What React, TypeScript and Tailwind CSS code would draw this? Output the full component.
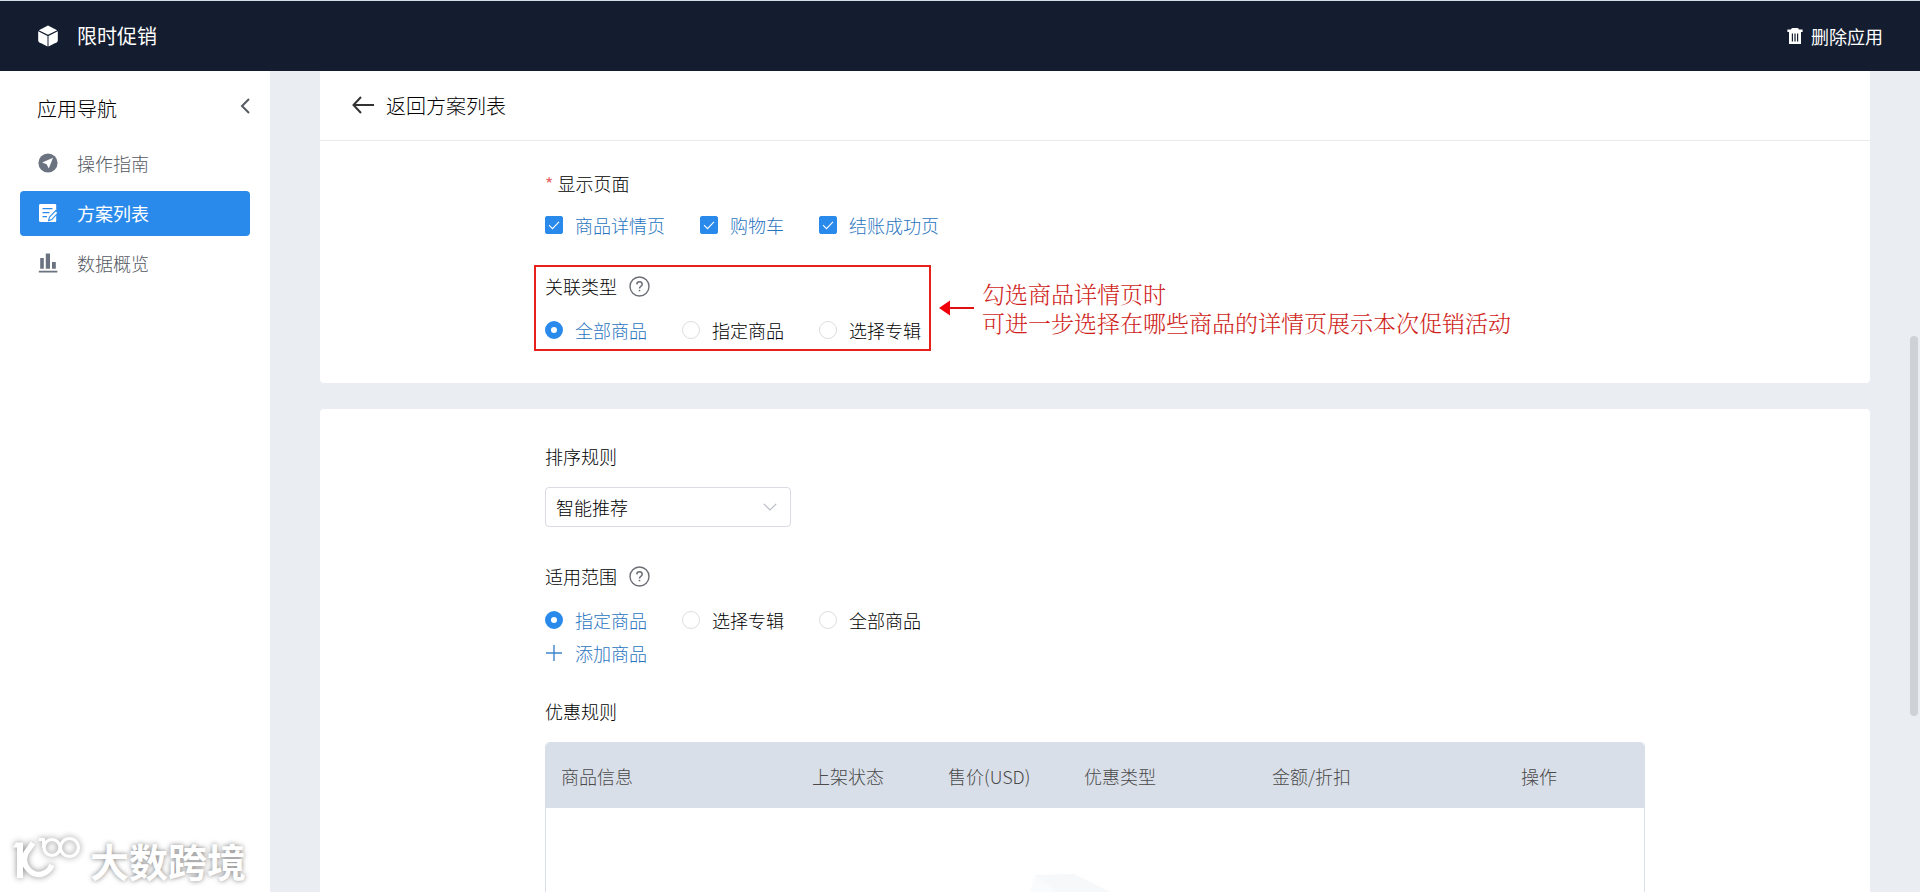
import { useState } from "react";
import type { ReactNode } from "react";

function CubeIcon() {
  return (
    <svg viewBox="0 0 20 22" className="h-[22px] w-5" fill="#fff" aria-hidden="true">
      <path d="M10 0.5 19.2 5.2 10 9.8 0.8 5.2Z" />
      <path d="M0.2 6.2 9.5 10.9V21.6L1.2 17.3Q0.2 16.7 0.2 15.6Z" />
      <path d="M19.8 6.2 10.5 10.9V21.6L18.8 17.3Q19.8 16.7 19.8 15.6Z" />
    </svg>
  );
}

function TrashIcon() {
  return (
    <svg viewBox="0 0 16 16" className="size-4" fill="#fff" aria-hidden="true">
      <path
        fillRule="evenodd"
        d="M4 1.5Q4.2 0 5.6 0h4.8Q11.8 0 12 1.5H15.6V4H14V16H2V4H0.4V1.5ZM4.8 5.6V13.4H6V5.6ZM7.4 5.6V13.4H8.6V5.6ZM10 5.6V13.4H11.2V5.6Z"
      />
    </svg>
  );
}

function GuideIcon() {
  return (
    <svg viewBox="0 0 20 20" className="size-5" aria-hidden="true">
      <circle cx="10" cy="10" r="9.6" fill="#6b7280" />
      <path d="M15 4.8 4.2 9.6 8.6 11.2 10.8 15.4Z" fill="#fff" />
    </svg>
  );
}

function ListIcon() {
  return (
    <svg viewBox="0 0 20 20" className="size-5" fill="none" aria-hidden="true">
      <path d="M2.5 1H17Q18.2 1 18.2 2.2V17.8Q18.2 19 17 19H2.5Q1 19 1 17.8V2.2Q1 1 2.5 1Z" fill="#fff" />
      <path d="M4.5 5.6H14.5M4.5 9.6H11.5M4.5 13.6H9" stroke="#2a8aeb" strokeWidth="1.3" />
      <path d="M10.6 17.6 11.4 14.2 17.8 7.6 20 9.8 13.8 16.6Z" fill="#fff" stroke="#2a8aeb" strokeWidth="1.1" />
    </svg>
  );
}

function ChartIcon() {
  return (
    <svg viewBox="0 0 20 20" className="size-5" fill="#6b7280" aria-hidden="true">
      <path d="M2.2 5H5.8V15.8H2.2ZM7.8 0.6H12V15.8H7.8ZM14 9H17.8V15.8H14ZM0.8 17.8H19.4V19.6H0.8Z" />
    </svg>
  );
}

function HelpIcon() {
  return (
    <svg viewBox="0 0 21 21" className="size-[21px]" fill="none" stroke="#6b6e74" aria-hidden="true">
      <circle cx="10.5" cy="10.5" r="9.5" strokeWidth="1.4" />
      <path d="M7.8 8.4Q7.9 5.8 10.5 5.8T13.2 8.2Q13.2 9.4 11.8 10.3 10.5 11.1 10.5 12.4" strokeWidth="1.5" />
      <path d="M10.5 13.8V15.3" strokeWidth="1.6" />
    </svg>
  );
}

function HelpButton() {
  return (
    <button type="button" aria-label="帮助">
      <HelpIcon />
    </button>
  );
}

const navItems: { label: string; icon: ReactNode; active?: boolean }[] = [
  { label: "操作指南", icon: <GuideIcon /> },
  { label: "方案列表", icon: <ListIcon />, active: true },
  { label: "数据概览", icon: <ChartIcon /> },
];

function CheckOption({ label }: { label: string }) {
  const [checked, setChecked] = useState(true);
  return (
    <label className={checked ? "flex items-center gap-3 text-[#2874c0]" : "flex items-center gap-3"}>
      <span className="grid size-[18px] place-items-center">
        <input
          type="checkbox"
          checked={checked}
          onChange={(e) => setChecked(e.target.checked)}
          className="col-start-1 row-start-1 size-[18px] appearance-none rounded-xs border border-[#d5d8de] bg-white checked:border-[#2a8aeb] checked:bg-[#2a8aeb]"
        />
        <svg viewBox="0 0 18 18" className="pointer-events-none col-start-1 row-start-1 size-[18px]" fill="none" aria-hidden="true">
          <path d="M4 9.2 7.5 12.6 14 5.8" stroke="#fff" strokeWidth="1.1" />
        </svg>
      </span>
      {label}
    </label>
  );
}

function RadioRow({ name, options }: { name: string; options: string[] }) {
  const [value, setValue] = useState(options[0]);
  return (
    <div className="flex gap-[35px]">
      {options.map((o) => (
        <label key={o} className={o === value ? "flex items-center gap-3 text-[#2874c0]" : "flex items-center gap-3"}>
          <input
            type="radio"
            name={name}
            checked={o === value}
            onChange={() => setValue(o)}
            className="size-[18px] appearance-none rounded-full border border-[#dcdee3] bg-white checked:border-[6px] checked:border-[#2a8aeb]"
          />
          {o}
        </label>
      ))}
    </div>
  );
}

const columns = [
  { label: "商品信息", width: "w-[251px]" },
  { label: "上架状态", width: "w-[136px]" },
  { label: "售价(USD)", width: "w-[136px]" },
  { label: "优惠类型", width: "w-[188px]" },
  { label: "金额/折扣", width: "w-[249px]" },
  { label: "操作", width: "w-[140px]" },
];

export default function App() {
  return (
    <div className="flex h-screen flex-col overflow-hidden bg-[#eaedf2] font-['Noto_Sans_CJK_SC',sans-serif] text-lg leading-6 font-light text-black">
      <header className="flex h-[71px] shrink-0 items-center justify-between border-t border-[#d3dbe6] bg-[#141c2f] pr-[37px] pl-[38px] font-normal text-white">
        <div className="flex items-center gap-[19px] text-xl">
          <CubeIcon />
          <h1>限时促销</h1>
        </div>
        <button type="button" className="flex items-center gap-2">
          <TrashIcon />
          删除应用
        </button>
      </header>

      <div className="flex min-h-0 flex-1">
        <aside className="relative w-[270px] shrink-0 bg-white px-5 pt-[26px]">
          <div className="flex items-center justify-between pl-[17px] text-xl leading-6">
            <h2>应用导航</h2>
            <button type="button" aria-label="收起导航">
              <svg viewBox="0 0 10 16" className="mb-1.5 h-4 w-[10px]" fill="none" aria-hidden="true">
                <path d="M9 1 2 8 9 15" stroke="#555a62" strokeWidth="2" />
              </svg>
            </button>
          </div>
          <nav className="mt-5 flex flex-col gap-[5px]">
            {navItems.map((item) => (
              <a
                key={item.label}
                href="#"
                className={
                  item.active
                    ? "flex h-[45px] items-center gap-[19px] rounded bg-[#2a8aeb] pb-0.5 pl-[18px] font-normal text-white"
                    : "flex h-[45px] items-center gap-[19px] rounded pb-0.5 pl-[18px] text-[#555a63]"
                }
              >
                {item.icon}
                {item.label}
              </a>
            ))}
          </nav>

          <div className="absolute bottom-2 left-3 flex items-center gap-2 text-white">
            <svg viewBox="0 0 70 48" className="h-12 w-[70px] overflow-visible drop-shadow-[0_0_3px_rgba(0,0,0,0.45)]" aria-hidden="true">
              <path d="M4 6.5H11V42H5V11.5H1Z" fill="currentColor" />
              <g fill="none" stroke="currentColor">
                <path d="M21 7 14 17Q10 26 16 33 22 40 30 38 37 36 40 29" strokeWidth="5.5" />
                <path d="M27 3.5H31.5V12" strokeWidth="3" />
                <circle cx="40" cy="11.5" r="8" strokeWidth="3.2" />
                <circle cx="57.5" cy="11.5" r="9" strokeWidth="3.2" />
              </g>
            </svg>
            <span className="text-[39px] leading-12 font-bold [text-shadow:0_0_5px_rgba(0,0,0,0.5)]">大数跨境</span>
          </div>
        </aside>

        <main className="relative min-w-0 flex-1 overflow-hidden px-[50px]">
          <section className="rounded-b bg-white pb-8">
            <div className="flex h-[70px] items-center border-b border-[#e9eaec] px-8">
              <a href="#" className="flex items-center gap-3 text-xl leading-6">
                <svg viewBox="0 0 22 18" className="mb-0.5 h-[18px] w-[22px]" fill="none" stroke="#333" strokeWidth="2" aria-hidden="true">
                  <path d="M9 1 1.5 9 9 17M1.5 9H22" />
                </svg>
                返回方案列表
              </a>
            </div>
            <div className="mx-auto max-w-[1100px] pt-[30px]">
              <h3>
                <span className="mr-1 font-normal text-[#e8696b]">*</span>
                显示页面
              </h3>
              <div className="mt-[18px] flex gap-[35px]">
                <CheckOption label="商品详情页" />
                <CheckOption label="购物车" />
                <CheckOption label="结账成功页" />
              </div>
              <div className="mt-7 -ml-[11px] flex items-center gap-2">
                <div className="w-[397px] shrink-0 border-2 border-[#e8201c] py-[7px] pl-[9px]">
                  <div className="mb-5 flex items-center gap-3">
                    <h3>关联类型</h3>
                    <HelpButton />
                  </div>
                  <RadioRow name="relation" options={["全部商品", "指定商品", "选择专辑"]} />
                </div>
                <svg viewBox="0 0 35 16" className="h-4 w-[35px] shrink-0" aria-hidden="true">
                  <path d="M0 8 11 0.5V15.5Z" fill="#f0000a" />
                  <path d="M10 8H35" stroke="#e01010" strokeWidth="2" />
                </svg>
                <p className="font-['Noto_Serif_CJK_SC','Liberation_Serif','Noto_Sans_CJK_SC',serif] text-[23px] leading-[29px] whitespace-pre-line text-[#d01f1c]">
                  {"勾选商品详情页时\n可进一步选择在哪些商品的详情页展示本次促销活动"}
                </p>
              </div>
            </div>
          </section>

          <section className="mt-[26px] rounded-t bg-white">
            <div className="mx-auto max-w-[1100px] pt-[35px]">
              <label htmlFor="sort-rule" className="block">
                排序规则
              </label>
              <div className="mt-[19px] grid w-[246px] items-center">
                <select
                  id="sort-rule"
                  className="col-start-1 row-start-1 h-10 w-full appearance-none rounded border border-[#d9dce2] bg-white pl-[10px]"
                >
                  <option>智能推荐</option>
                </select>
                <svg viewBox="0 0 14 8" className="pointer-events-none col-start-1 row-start-1 mr-[14px] h-2 w-[14px] justify-self-end" fill="none" aria-hidden="true">
                  <path d="M0.8 0.8 7 7 13.2 0.8" stroke="#b9bdc5" strokeWidth="1.2" />
                </svg>
              </div>

              <div className="mt-[37px] mb-5 flex items-center gap-3">
                <h3>适用范围</h3>
                <HelpButton />
              </div>
              <RadioRow name="scope" options={["指定商品", "选择专辑", "全部商品"]} />
              <button type="button" className="mt-[9px] flex items-center gap-3 text-[#2874c0]">
                <svg viewBox="0 0 18 18" className="size-[18px]" fill="none" stroke="#3e86cc" strokeWidth="1.4" aria-hidden="true">
                  <path d="M9 1V17M1 9H17" />
                </svg>
                添加商品
              </button>

              <h3 className="mt-[34px]">优惠规则</h3>
              <div className="mt-[19px] overflow-hidden rounded-t-[5px] border border-b-0 border-[#d9dfe8]">
                <table className="w-full table-fixed text-left">
                  <thead className="h-[65px] bg-[#d9dfe8] text-[#4a4a4a]">
                    <tr>
                      {columns.map((c) => (
                        <th key={c.label} className={`${c.width} pl-[15px] font-light`}>
                          {c.label}
                        </th>
                      ))}
                    </tr>
                  </thead>
                  <tbody>
                    <tr>
                      <td colSpan={6} className="pt-[66px]">
                        <svg viewBox="0 0 140 100" className="mx-auto h-[100px] w-[140px]" aria-hidden="true">
                          <path d="M9 1 48 0 96 24 100 100H0V30Z" fill="#fafbfc" />
                          <path d="M9 1 48 0 96 24 60 40Z" fill="#f7f8fa" />
                        </svg>
                      </td>
                    </tr>
                  </tbody>
                </table>
              </div>
            </div>
          </section>
          <div className="absolute top-[265px] right-[2px] h-[380px] w-2 rounded-full bg-[#ced2d7]" />
        </main>
      </div>
    </div>
  );
}
